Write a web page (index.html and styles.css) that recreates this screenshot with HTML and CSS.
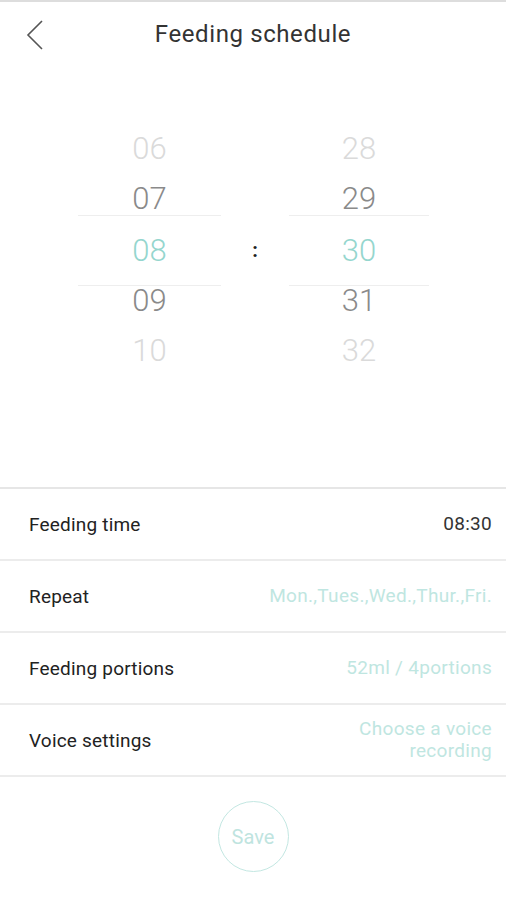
FILE: index.html
```html
<!DOCTYPE html>
<html lang="en">
<head>
    <meta charset="UTF-8">
    <meta name="viewport" content="width=device-width, initial-scale=1.0">
    <title>Feeding schedule</title>
    <link rel="stylesheet" href="styles.css">
</head>
<body>
    <div class="screen">
        <div class="header">
            <span class="back">
                <svg width="18" height="32" viewBox="0 0 18 32">
                    <polyline points="16,2 2,16 16,30" fill="none" stroke="#555" stroke-width="1.6"/>
                </svg>
            </span>
            <h1>Feeding schedule</h1>
        </div>

        <div class="picker">
            <div class="wheel wheel-hours">
                <div class="num far">06</div>
                <div class="num near">07</div>
                <div class="num current">08</div>
                <div class="num near">09</div>
                <div class="num far">10</div>
            </div>
            <div class="colon">:</div>
            <div class="wheel wheel-minutes">
                <div class="num far">28</div>
                <div class="num near">29</div>
                <div class="num current">30</div>
                <div class="num near">31</div>
                <div class="num far">32</div>
            </div>
        </div>

        <div class="settings">
            <div class="row">
                <span class="label">Feeding time</span>
                <span class="value dark">08:30</span>
            </div>
            <div class="row">
                <span class="label">Repeat</span>
                <span class="value">Mon.,Tues.,Wed.,Thur.,Fri.</span>
            </div>
            <div class="row">
                <span class="label">Feeding portions</span>
                <span class="value">52ml / 4portions</span>
            </div>
            <div class="row">
                <span class="label">Voice settings</span>
                <span class="value">Choose a voice<br>recording</span>
            </div>
        </div>

        <div class="actions">
            <button class="save">Save</button>
        </div>
    </div>
</body>
</html>
```

FILE: styles.css
```css
body {
    margin: 0;
    background: #ffffff;
    font-family: Roboto, 'Noto Sans', sans-serif;
}

.screen {
    border-top: 2px solid #dddddd;
    min-height: 898px;
}

.header {
    height: 66px;
    display: flex;
    align-items: center;
    justify-content: center;
    position: relative;
}

.header h1 {
    margin: 0 0 2px 0;
    font-size: 24px;
    font-weight: 400;
    letter-spacing: 0.6px;
    color: #333333;
}

.back {
    position: absolute;
    left: 26px;
    top: 17px;
    display: flex;
}

/* time wheel */
.picker {
    display: flex;
    justify-content: center;
    padding: 56px 0 111px 0;
    margin-left: 1px;
}

.wheel {
    display: flex;
    flex-direction: column;
}

.wheel-hours {
    width: 143px;
}

.wheel-minutes {
    width: 140px;
}

.num {
    height: 50px;
    line-height: 50px;
    text-align: center;
    font-size: 31px;
    font-weight: 300;
}

.num.far {
    color: #dadada;
}

.num.near {
    color: #8a8a8a;
}

.num.current {
    color: #95d6ce;
    height: 69px;
    line-height: 69px;
    margin: -9px 0 -10px 0;
    border-top: 1px solid #eeeeee;
    border-bottom: 1px solid #eeeeee;
}

.colon {
    width: 68px;
    text-align: center;
    align-self: center;
    font-size: 20px;
    font-weight: 700;
    color: #222222;
}

/* settings list */
.settings {
    border-top: 2px solid #e6e6e6;
}

.row {
    display: flex;
    justify-content: space-between;
    align-items: center;
    height: 70px;
    padding: 0 14px 0 29px;
    border-bottom: 2px solid #ececec;
}

.label {
    font-size: 19px;
    letter-spacing: 0.2px;
    color: #222222;
}

.value {
    font-size: 19px;
    letter-spacing: 0.3px;
    color: #bfe6e1;
    text-align: right;
    line-height: 22px;
}

.value.dark {
    color: #333333;
}

.actions {
    display: flex;
    justify-content: center;
    padding-top: 24px;
}

.save {
    width: 71px;
    height: 71px;
    border-radius: 50%;
    border: 1.5px solid #c3e7e2;
    background: #ffffff;
    color: #bfe4df;
    font-family: Roboto, sans-serif;
    font-size: 20px;
    padding: 0;
}
```
